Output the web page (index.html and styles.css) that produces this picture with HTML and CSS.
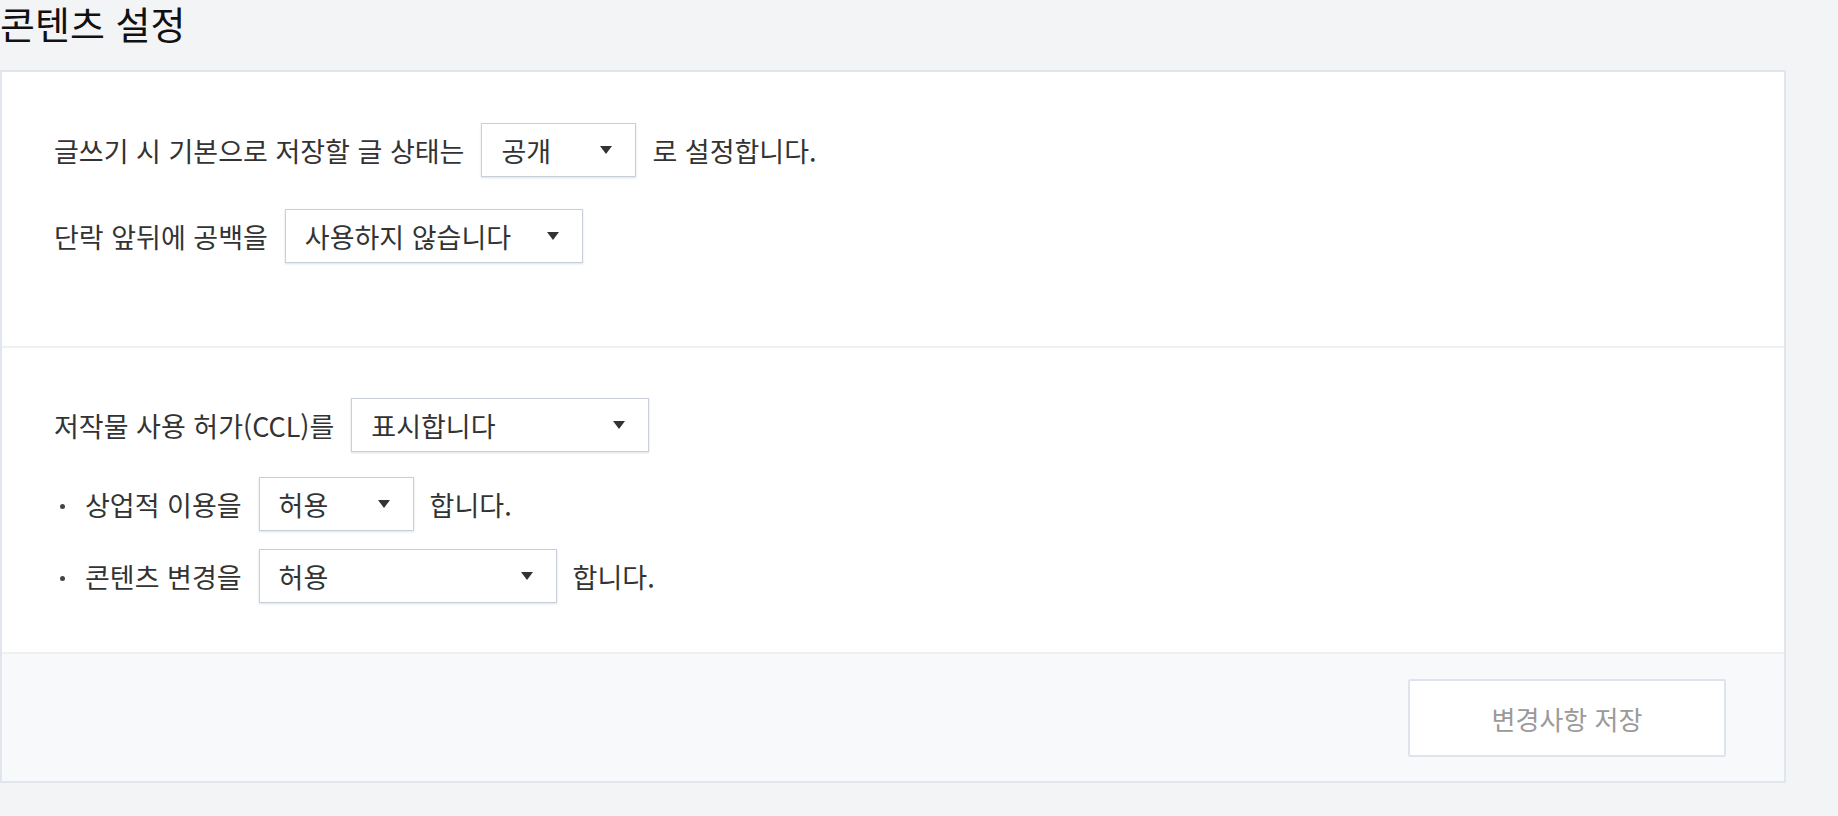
FILE: index.html
```html
<!DOCTYPE html>
<html lang="ko">
<head>
<meta charset="utf-8">
<title>콘텐츠 설정</title>
<link rel="stylesheet" href="styles.css">
</head>
<body>
<div class="page">
  <h1 class="title">콘텐츠 설정</h1>
  <div class="card">
    <div class="section section-first">
      <div class="row">
        <span class="label">글쓰기 시 기본으로 저장할 글 상태는</span>
        <div class="select select-sm"><span class="select-text">공개</span><svg class="caret" width="12" height="8" viewBox="0 0 12 8"><path d="M0 0H12L6 8Z"/></svg></div>
        <span class="label">로 설정합니다.</span>
      </div>
      <div class="row">
        <span class="label">단락 앞뒤에 공백을</span>
        <div class="select select-lg"><span class="select-text">사용하지 않습니다</span><svg class="caret" width="12" height="8" viewBox="0 0 12 8"><path d="M0 0H12L6 8Z"/></svg></div>
      </div>
    </div>
    <div class="section section-second">
      <div class="row row-ccl">
        <span class="label">저작물 사용 허가(CCL)를</span>
        <div class="select select-lg"><span class="select-text">표시합니다</span><svg class="caret" width="12" height="8" viewBox="0 0 12 8"><path d="M0 0H12L6 8Z"/></svg></div>
      </div>
      <ul class="bullets">
        <li class="row bullet-row">
          <span class="label">상업적 이용을</span>
          <div class="select select-sm"><span class="select-text">허용</span><svg class="caret" width="12" height="8" viewBox="0 0 12 8"><path d="M0 0H12L6 8Z"/></svg></div>
          <span class="label">합니다.</span>
        </li>
        <li class="row bullet-row">
          <span class="label">콘텐츠 변경을</span>
          <div class="select select-lg"><span class="select-text">허용</span><svg class="caret" width="12" height="8" viewBox="0 0 12 8"><path d="M0 0H12L6 8Z"/></svg></div>
          <span class="label">합니다.</span>
        </li>
      </ul>
    </div>
    <div class="footer">
      <button class="save-btn" type="button">변경사항 저장</button>
    </div>
  </div>
</div>
</body>
</html>
```
FILE: styles.css
```css
* {
  box-sizing: border-box;
}

html, body {
  margin: 0;
  padding: 0;
  background: #f3f4f6;
}

body {
  font-family: "Noto Sans CJK KR", "Noto Sans", sans-serif;
  color: #333333;
  width: 1838px;
  height: 816px;
  overflow: hidden;
}

.page {
  width: 1786px;
}

.title {
  margin: 0 0 25px 0;
  font-size: 38px;
  line-height: 45px;
  font-weight: 400;
  color: #111111;
}

.card {
  width: 1786px;
  background: #ffffff;
  border: 2px solid #e1e5ee;
}

.section {
  padding-left: 52px;
  border-bottom: 2px solid #eef0f4;
}

.section-first {
  padding-top: 51px;
  padding-bottom: 83px;
  display: flex;
  flex-direction: column;
  gap: 32px;
}

.section-second {
  padding-top: 50px;
  padding-bottom: 49px;
}

.row {
  display: flex;
  align-items: center;
  height: 54px;
  font-size: 27px;
}

.label {
  line-height: 1;
  white-space: nowrap;
}

.select {
  height: 54px;
  margin: 0 16px 0 17px;
  padding: 0 23px 0 19px;
  display: flex;
  align-items: center;
  justify-content: space-between;
  background: #ffffff;
  border: 1px solid #c9cedb;
  box-shadow: 0 1px 2px rgba(40, 50, 80, 0.15);
  color: #333333;
}

.select-sm {
  width: 155px;
}

.select-lg {
  width: 298px;
}

.select-text {
  line-height: 1;
  white-space: nowrap;
}

.caret {
  fill: #333333;
  flex: none;
}

.row-ccl {
  margin-bottom: 25px;
}

.bullets {
  list-style: none;
  margin: 0;
  padding: 0;
  display: flex;
  flex-direction: column;
  gap: 18px;
}

.bullet-row::before {
  content: "";
  width: 5px;
  height: 5px;
  border-radius: 50%;
  background: #444444;
  margin: 4px 20px 0 6px;
  flex: none;
}

.footer {
  background: #f8f9fb;
  padding: 25px 58px 24px 0;
  display: flex;
  justify-content: flex-end;
}

.save-btn {
  width: 318px;
  height: 78px;
  background: #ffffff;
  border: 2px solid #dfe3ec;
  border-radius: 2px;
  font-family: "Noto Sans CJK KR", "Noto Sans", sans-serif;
  font-size: 26px;
  color: #9a9a9a;
  padding: 0;
}
```
